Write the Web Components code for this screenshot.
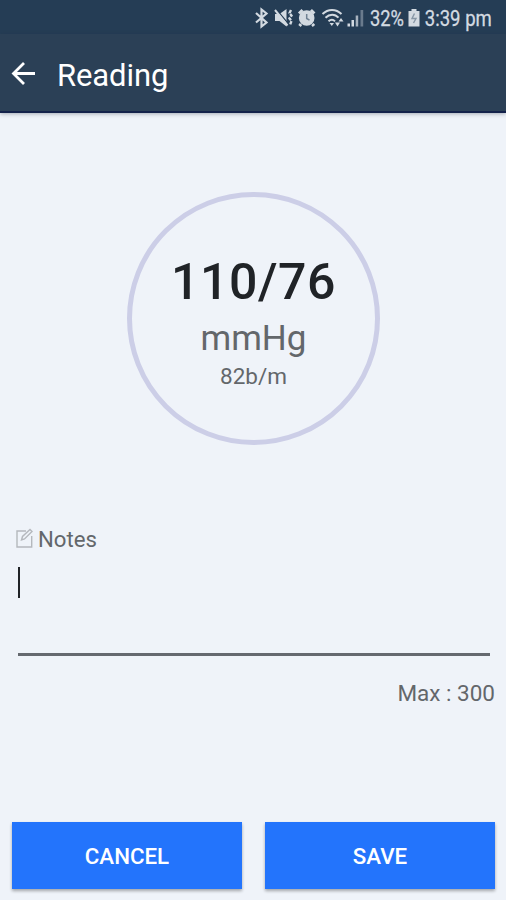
<!DOCTYPE html>
<html lang="en">
<head>
<meta charset="utf-8">
<title>Reading</title>
<style>
html, body {
    margin: 0;
    height: 100%;
}
body {
    font-family: Roboto, "Liberation Sans", sans-serif;
    background-color: #eff3f9;
    color: #63676b;
    overflow: hidden;
}
</style>
</head>
<body>
<reading-page></reading-page>
<script>
class StatusBar extends HTMLElement {
    styles = `
:host {
    display: block;
    height: 34px;
    background-color: #253d55;
}
svg {
    display: block;
}
text {
    font-size: 21.5px;
    fill: #d3dae1;
    stroke: #d3dae1;
    stroke-width: .3px;
}
`;

    constructor() {
        super();
        this.attachShadow({ mode: 'open' });
    }

    connectedCallback() {
        this.shadowRoot.innerHTML = `
<style>
${this.styles}
</style>
<svg width="506" height="34" viewBox="0 0 506 34" fill="#d3dae1">
    <!-- bluetooth -->
    <path d="M256 13l10.500 9.500-5 4V9.500l5 4L256 22.500" fill="none" stroke="#d3dae1" stroke-width="2.200"></path>
    <!-- muted -->
    <path d="M275 14h4.500l7-5v17.500l-7-5.500H275z"></path>
    <path d="M276.500 9.500l11.500 14" fill="none" stroke="#253d55" stroke-width="1.200"></path>
    <path d="M275 10l12.500 15.500" fill="none" stroke="#d3dae1" stroke-width="2"></path>
    <path d="M291 10l-1.500 3 2 2.500-2 3 2 2.500-1.500 4" fill="none" stroke="#d3dae1" stroke-width="2.400" stroke-dasharray="3.500 1"></path>
    <!-- alarm -->
    <circle cx="306.700" cy="18" r="7.800"></circle>
    <path d="M299 13.500l3.500-3.500M314.400 13.500l-3.500-3.500M301 24l-1.500 2M312.400 24l1.500 2" fill="none" stroke="#d3dae1" stroke-width="3"></path>
    <path d="M306.700 14v4.500l2.800 1.700" fill="none" stroke="#6f8193" stroke-width="1.500"></path>
    <!-- wifi -->
    <g fill="none" stroke="#d3dae1" stroke-width="2">
        <path d="M322.500 14c5.500-5.500 13.500-5.500 19 0M325.500 17.700c4-4 9.500-4 13 0M328.500 21.300c2.500-2.200 4.500-2.200 6.500 0"></path>
    </g>
    <path d="M329.500 23h4.500l-2.200 3zM335 22.500h5l-2.500 4zM338.500 21.500l2.500-3.500 2.500 3.500z"></path>
    <!-- signal -->
    <path d="M347.500 23.500h2.500v3h-2.500zM351.500 20h2.500v6.500h-2.500z"></path>
    <path d="M355.700 15.500h2.500v11h-2.500z" opacity=".75"></path>
    <path d="M360.500 10h2.700v16.500h-2.700z" opacity=".4"></path>
    <text x="370" y="25.500" textLength="34" lengthAdjust="spacingAndGlyphs">32%</text>
    <!-- battery -->
    <path d="M408.500 11h3v-2h5v2h3v15.500h-11z"></path>
    <path d="M414.500 13.500l-2.500 5h4l-2.500 4.500" fill="none" stroke="#8796a5" stroke-width="1.400"></path>
    <text x="424.800" y="25.500" textLength="67" lengthAdjust="spacingAndGlyphs">3:39 pm</text>
</svg>
`;
    }
}

class AppBar extends HTMLElement {
    styles = `
:host {
    display: flex;
    align-items: center;
    gap: 21px;
    height: 79px;
    padding: 0 10px;
    box-sizing: border-box;
    background-color: #2b4056;
    border-bottom: 2px solid #14224b;
    box-shadow: 0 1px 4px rgba(30, 40, 60, .35);
    color: #fff;
    font-size: 31px;
    letter-spacing: -.1px;
}
svg {
    flex: none;
}
span {
    padding-top: 6px;
}
`;

    constructor() {
        super();
        this.attachShadow({ mode: 'open' });
    }

    connectedCallback() {
        this.shadowRoot.innerHTML = `
<style>
${this.styles}
</style>
<svg width="26" height="26" viewBox="0 0 26 26" fill="none" stroke="#fff" stroke-width="2.800">
    <path d="M25 13.500H3.500M14 3L3.500 13.500 14 24"></path>
</svg>
<span><slot></slot></span>
`;
    }
}

class ReadingDial extends HTMLElement {
    styles = `
:host {
    display: flex;
    flex-direction: column;
    align-items: center;
    width: 253px;
    height: 253px;
    padding-top: 53px;
    box-sizing: border-box;
    border: 5px solid #cccee7;
    border-radius: 50%;
}
div {
    white-space: nowrap;
}
.pressure {
    height: 66px;
    line-height: 65px;
    font-size: 50px;
    font-weight: 500;
    letter-spacing: .6px;
    color: #202327;
}
.unit {
    height: 45px;
    line-height: 46px;
    font-size: 35px;
}
.pulse {
    height: 30px;
    line-height: 30px;
    font-size: 22.500px;
}
`;

    constructor() {
        super();
        this.attachShadow({ mode: 'open' });
    }

    connectedCallback() {
        this.shadowRoot.innerHTML = `
<style>
${this.styles}
</style>
<div class="pressure">${this.getAttribute('pressure')}</div>
<div class="unit">mmHg</div>
<div class="pulse">${this.getAttribute('pulse')}b/m</div>
`;
    }
}

class NotesField extends HTMLElement {
    styles = `
:host {
    display: block;
    font-size: 22.500px;
}
.label {
    display: flex;
    align-items: center;
    gap: 4px;
    height: 30px;
    padding-left: 16px;
    font-size: 22.200px;
}
.input {
    height: 102px;
    margin: 0 16px 0 18px;
    padding-top: 13px;
    box-sizing: border-box;
    border-bottom: 3px solid #65696f;
}
.caret {
    width: 2px;
    height: 31px;
    background-color: #202327;
}
.limit {
    margin-top: 22px;
    padding-right: 11px;
    line-height: 30px;
    text-align: right;
}
`;

    constructor() {
        super();
        this.attachShadow({ mode: 'open' });
    }

    connectedCallback() {
        this.shadowRoot.innerHTML = `
<style>
${this.styles}
</style>
<div class="label">
    <svg width="18" height="22" viewBox="0 0 18 22" fill="none" stroke="#b5b8bd" stroke-width="1.400">
        <path d="M10 3H1v16h14.700V8"></path>
        <path d="M5.500 12l1-3.500L14 1.500l2 2-7.500 7.500z"></path>
    </svg>
    <span><slot></slot></span>
</div>
<div class="input"><div class="caret"></div></div>
<div class="limit">Max : ${this.getAttribute('max')}</div>
`;
    }
}

class ActionButton extends HTMLElement {
    styles = `
:host {
    display: block;
    flex: 1;
}
button {
    display: block;
    width: 100%;
    height: 67px;
    padding: 0;
    border: none;
    background-color: #2374fc;
    box-shadow: 0 2px 3px rgba(0, 0, 0, .32);
    color: #fff;
    font-family: inherit;
    font-size: 22.300px;
    font-weight: 500;
    cursor: pointer;
}
`;

    constructor() {
        super();
        this.attachShadow({ mode: 'open' });
    }

    connectedCallback() {
        this.shadowRoot.innerHTML = `
<style>
${this.styles}
</style>
<button><slot></slot></button>
`;
    }
}

class ReadingPage extends HTMLElement {
    styles = `
:host {
    display: flex;
    flex-direction: column;
    width: 506px;
    height: 900px;
}
reading-dial {
    margin: 79px 0 0 127px;
}
notes-field {
    margin-top: 79px;
}
.actions {
    display: flex;
    gap: 23px;
    margin-top: auto;
    padding: 0 11px 11px 12px;
}
`;

    constructor() {
        super();
        this.attachShadow({ mode: 'open' });
    }

    connectedCallback() {
        this.shadowRoot.innerHTML = `
<style>
${this.styles}
</style>
<status-bar></status-bar>
<app-bar>Reading</app-bar>
<reading-dial pressure="110/76" pulse="82"></reading-dial>
<notes-field max="300">Notes</notes-field>
<div class="actions">
    <action-button>CANCEL</action-button>
    <action-button>SAVE</action-button>
</div>
`;
    }
}

customElements.define('status-bar', StatusBar);
customElements.define('app-bar', AppBar);
customElements.define('reading-dial', ReadingDial);
customElements.define('notes-field', NotesField);
customElements.define('action-button', ActionButton);
customElements.define('reading-page', ReadingPage);
</script>
</body>
</html>
